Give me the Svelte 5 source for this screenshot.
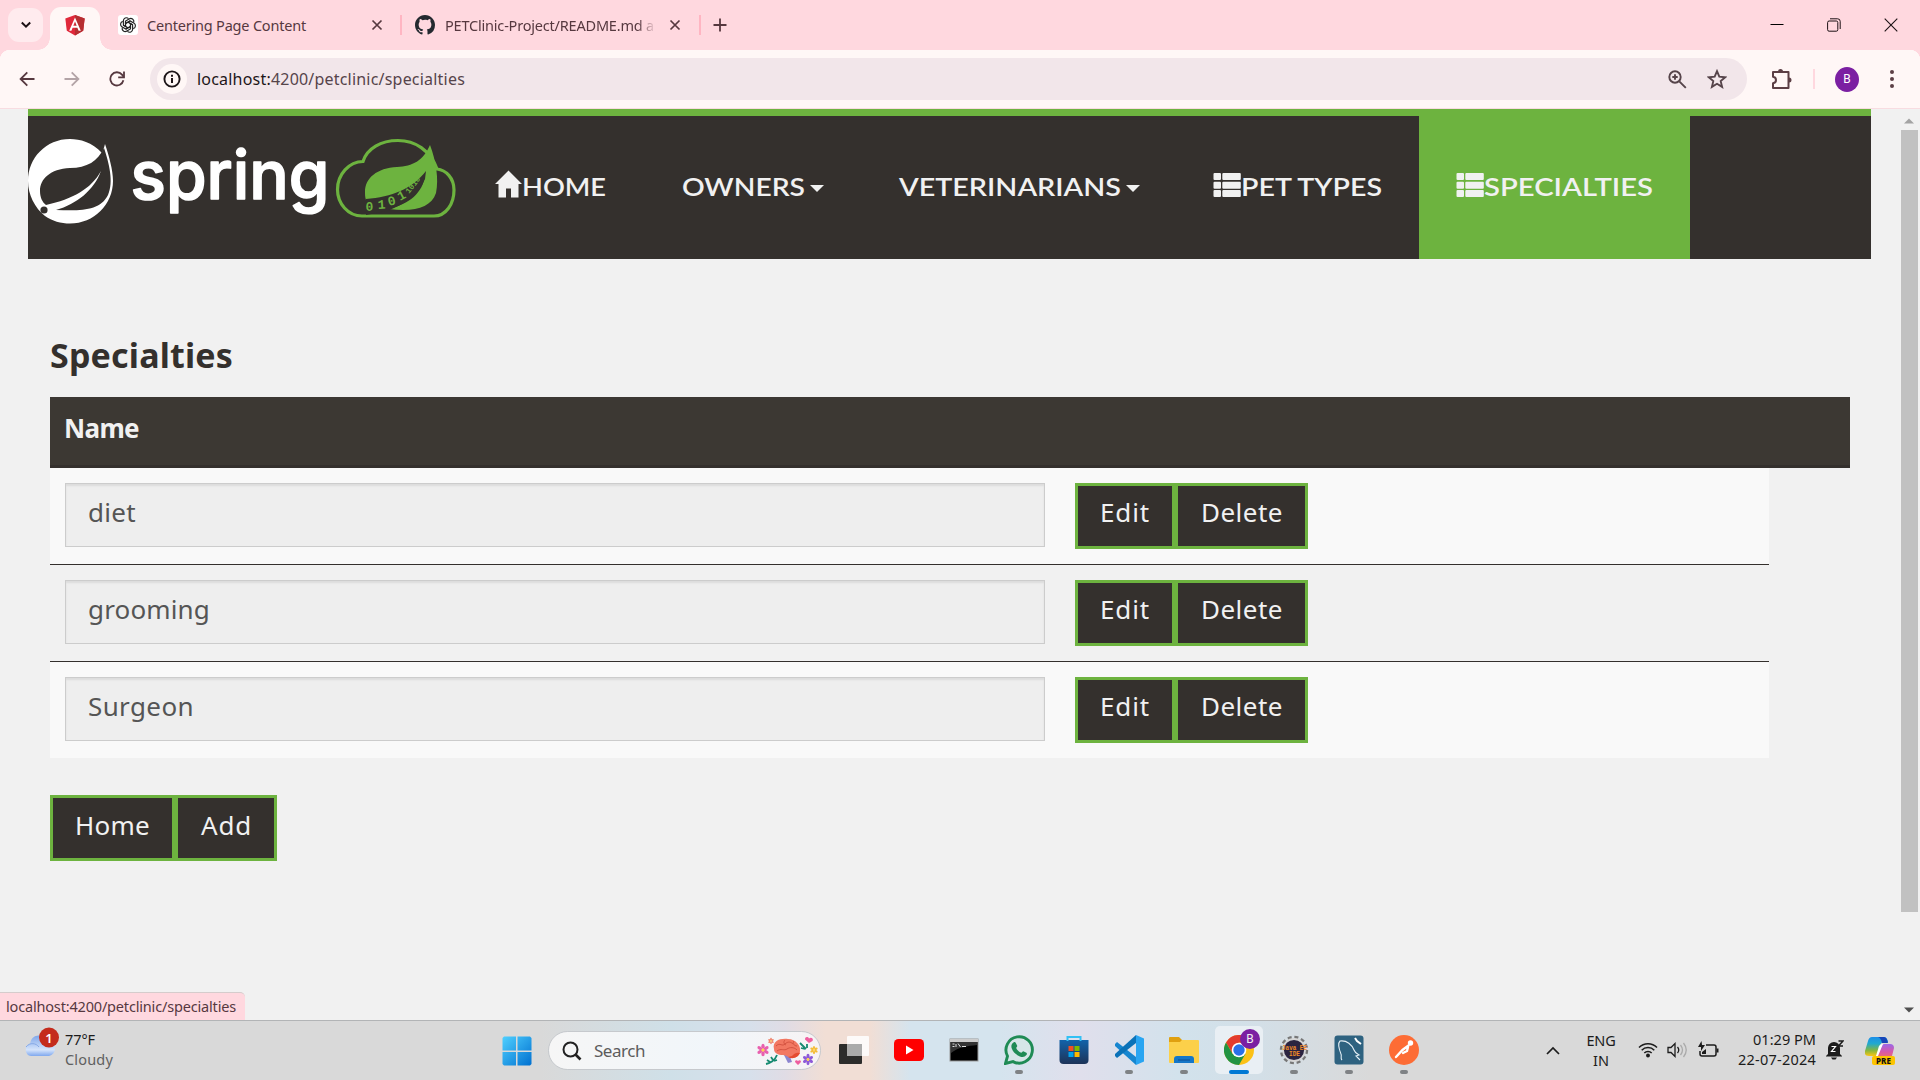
<script>
  const specialties = ['diet', 'grooming', 'Surgeon'];
  const inputWidths = { diet: 48, grooming: 122, Surgeon: 106 };

  // Tracks a label out (or in) so that it fills the given width.
  function fit(node, width) {
    const natural = node.getBoundingClientRect().width;
    node.style.letterSpacing = (width - natural) / node.textContent.length + 'px';
  }
</script>

{#snippet navText(label, width)}
  <svg class="nav-text" width={width} height="36" viewBox="0 0 {width} 36">
    <text x="0" y="27" textLength={width} lengthAdjust="spacingAndGlyphs">{label}</text>
  </svg>
{/snippet}

{#snippet listIcon()}
  <svg class="list-icon" width="28" height="24" viewBox="0 0 28 24">
    {#each [0, 8.7, 17] as y}
      <rect x="0.5" {y} width="7.5" height="7" rx="1" />
      <rect x="9.3" {y} width="18.5" height="7" rx="1" />
    {/each}
  </svg>
{/snippet}

{#snippet closeIcon()}
  <svg width="12" height="12" viewBox="0 0 12 12"><path d="M1.5 1.5l9 9M10.5 1.5l-9 9" stroke="#56383f" stroke-width="1.7" /></svg>
{/snippet}

<div class="screen">
  <header class="tabs">
    <div class="tab-search">
      <svg width="12" height="10" viewBox="0 0 12 10"><path d="M1.8 2.5l4.2 4.2 4.2-4.2" fill="none" stroke="#1d1015" stroke-width="2" /></svg>
    </div>
    <div class="active-tab">
      <svg width="20" height="21" viewBox="0 0 20 21">
        <path d="M10 0l9.7 3.4-1.5 12.4L10 20.6 1.8 15.8.3 3.4z" fill="#e0283a" />
        <path d="M10 0l9.7 3.4-1.5 12.4L10 20.6z" fill="#b52e31" />
        <path d="M10 2.5L4.2 15.7h2.2l1.2-3h4.8l1.2 3h2.2zm0 4l1.7 4.3H8.3z" fill="#fff" fill-rule="evenodd" />
      </svg>
    </div>
    <div class="tab first">
      <span class="gpt">
        <svg width="18" height="18" viewBox="0 0 18 18" fill="none" stroke="#222" stroke-width="1.15">
          {#each [0, 60, 120, 180, 240, 300] as angle}
            <path transform="rotate({angle} 9 9)" d="M6.6 10.3V5.1l3.5-2.1a3.1 3.1 0 0 1 4.7 3.3M6.6 7.4l4.6-2.6" />
          {/each}
        </svg>
      </span>
      <span class="tab-title" use:fit={159}>Centering Page Content</span>
      {@render closeIcon()}
    </div>
    <i class="tab-sep"></i>
    <div class="tab second">
      <svg width="20" height="20" viewBox="0 0 16 16"><path fill="#24292f" d="M8 0C3.58 0 0 3.58 0 8c0 3.54 2.29 6.53 5.47 7.59.4.07.55-.17.55-.38v-1.49c-2.01.37-2.53-.49-2.69-.94-.09-.23-.48-.94-.82-1.13-.28-.15-.68-.52-.01-.53.63-.01 1.08.58 1.23.82.72 1.21 1.87.87 2.33.66.07-.52.28-.87.51-1.07-1.78-.2-3.64-.89-3.64-3.95 0-.87.31-1.59.82-2.15-.08-.2-.36-1.02.08-2.12 0 0 .67-.21 2.2.82A7.4 7.4 0 0 1 8 3.86c.68 0 1.36.09 2 .27 1.53-1.04 2.2-.82 2.2-.82.44 1.1.16 1.92.08 2.12.51.56.82 1.27.82 2.15 0 3.07-1.87 3.75-3.65 3.95.29.25.54.73.54 1.48v2.2c0 .21.15.46.55.38A8.01 8.01 0 0 0 16 8c0-4.42-3.58-8-8-8z" /></svg>
      <span class="tab-title faded" use:fit={209}>PETClinic-Project/README.md a</span>
      {@render closeIcon()}
    </div>
    <i class="tab-sep"></i>
    <svg class="plus" width="14" height="14" viewBox="0 0 14 14"><path d="M7 .5v13M.5 7h13" stroke="#56383f" stroke-width="1.8" /></svg>
    <div class="window-controls">
      <svg width="14" height="14" viewBox="0 0 14 14"><path d="M.5 6.500h13" stroke="#000" /></svg>
      <svg width="14" height="14" viewBox="0 0 14 14" fill="none" stroke="#1c1114"><rect x=".6" y="3" width="10.2" height="10.2" rx="1.5" /><path d="M3 .8h7.6a2.6 2.6 0 0 1 2.6 2.6V11" /></svg>
      <svg width="14" height="14" viewBox="0 0 14 14"><path d="M.7.7l12.6 12.6M13.3.7L.7 13.3" stroke="#1c1114" stroke-width="1.1" /></svg>
    </div>
  </header>

  <div class="toolbar">
    <svg class="tool" width="16" height="16" viewBox="0 0 16 16" fill="none" stroke="#56383f" stroke-width="1.8"><path d="M15.5 8H2M8.3 1.3L1.6 8l6.7 6.7" /></svg>
    <svg class="tool" width="16" height="16" viewBox="0 0 16 16" fill="none" stroke="#b3a3a6" stroke-width="1.8"><path d="M.5 8H14M7.7 1.3L14.4 8l-6.7 6.7" /></svg>
    <svg class="tool" width="16" height="16" viewBox="0 0 16 16" fill="none" stroke="#56383f" stroke-width="1.8"><path d="M14.4 9.3A6.6 6.6 0 1 1 13 3.6l1.6 2.2" /><path d="M15 .5v5.8H9.2" /></svg>
    <div class="omnibox">
      <span class="info">
        <svg width="18" height="18" viewBox="0 0 18 18"><circle cx="9" cy="9" r="7.6" fill="none" stroke="#1d1518" stroke-width="1.9" /><path d="M9 8v5M9 4.7v2" stroke="#1d1518" stroke-width="2" /></svg>
      </span>
      <span class="url" use:fit={268}><b>localhost:</b>4200/petclinic/specialties</span>
      <svg class="zoom" width="19" height="19" viewBox="0 0 19 19" fill="none" stroke="#56444a" stroke-width="1.9"><circle cx="7" cy="7" r="5.7" /><path d="M11.3 11.3l6.5 6.5M7 4.3v5.4M4.3 7h5.4" /></svg>
      <svg width="20" height="20" viewBox="0 0 20 20" fill="none" stroke="#56444a" stroke-width="1.9"><path d="M10 2.2l2.3 5.5 5.9.5-4.5 3.9 1.4 5.8L10 14.8 4.9 17.9l1.4-5.8-4.5-3.9 5.9-.5z" /></svg>
    </div>
    <svg class="puzzle" width="22" height="22" viewBox="0 0 22 22"><path d="M2 4h15.500v16H2v-4.700c4-.6 4-6 0-6.600z" fill="none" stroke="#5c3f45" stroke-width="2" stroke-linejoin="round" /><path d="M7 3.500a2.500 2.500 0 0 1 5 0zM18 9.500a2.500 2.500 0 0 1 0 5z" fill="#5c3f45" /></svg>
    <i class="tool-sep"></i>
    <span class="avatar">B</span>
    <svg class="dots" width="4" height="18" viewBox="0 0 4 18" fill="#5c3f45"><circle cx="2" cy="2" r="2" /><circle cx="2" cy="9" r="2" /><circle cx="2" cy="16" r="2" /></svg>
  </div>

  <main class="page">
    <div class="content">
      <nav>
        <svg class="logo" width="428" height="109" viewBox="0 -23 428 109">
          <path d="M74 14C64 3 52 0 42 0 18 0 0 19 0 42c0 14 7 27 17 35 7 5 16 7.500 25 7.500 24 0 43-19 43-42.500C85 31 81 17 77 5c-1 4-2 6-3 9z" fill="#fff" />
          <path d="M76 9c-6 13-17 20-34 20C22 30 12 40 12 52c0 6 2 11 6 14C45 60 63 50 73 32c-7 19-24 33-45 39 25 1 44 1 52-15 6-13 1-32-4-47z" fill="#34302d" />
          <circle cx="16" cy="71" r="3.600" fill="#34302d" />
          <text class="brand" x="102.500" y="60" textLength="199" lengthAdjust="spacingAndGlyphs">spring</text>
          <path d="M334 77h72c12 0 20-12 20-26 0-12-8-20-17-21C402 11 387 1.500 370 1.500c-17 0-31 8-35 21-14 0-25.500 13-25.500 28 0 14 10.500 26.500 24.500 26.500z" fill="none" stroke="#6db33f" stroke-width="3.200" />
          <path d="M402 6c-7 16-17 21-33 22-20 1-32 11-32 25 0 3 0 5 1 8l4 8c25-5 45-14 55-33-2 18-16 29-36 34 25 3 42-1 47-16 3-14 0-32-6-48z" fill="#6db33f" />
          <path d="M338 60c26-2 46-10 60-28l-1 8c-7 17-22 26-38 32l-21 4z" fill="#34302d" />
          <g class="bits" fill="#6db33f"><text x="337.500" y="72">0</text><text x="350" y="70" transform="rotate(-4 350 70)">1</text><text x="361" y="67" transform="rotate(-15 361 67)">0</text><text x="372" y="62" transform="rotate(-28 372 62)">1</text><text class="tiny" x="381" y="55" transform="rotate(-52 381 55)">1010</text></g>
        </svg>
        <div class="item home">
          <svg class="home-icon" width="28" height="28" viewBox="0 0 28 28"><path d="M14.500 .5L28 14H24.500v13.500H17v-9h-5v9H4.500V14H1z" fill="#f1f1f1" /></svg>
          {@render navText('HOME', 84)}
        </div>
        <div class="item owners">{@render navText('OWNERS', 123)}<i class="caret"></i></div>
        <div class="item vets">{@render navText('VETERINARIANS', 222)}<i class="caret"></i></div>
        <div class="item types">{@render listIcon()}{@render navText('PET TYPES', 141)}</div>
        <div class="item active">{@render listIcon()}{@render navText('SPECIALTIES', 169)}</div>
      </nav>

      <section>
        <h2><span use:fit={183}>Specialties</span></h2>
        <div class="thead"><span use:fit={75}>Name</span></div>
        <div class="tbody">
          {#each specialties as name}
            <div class="row">
              <div class="field"><span use:fit={inputWidths[name]}>{name}</span></div>
              <button class="edit"><span use:fit={50}>Edit</span></button>
              <button class="delete"><span use:fit={82}>Delete</span></button>
            </div>
          {/each}
        </div>
        <div class="actions">
          <button class="home-btn"><span use:fit={75}>Home</span></button>
          <button class="add"><span use:fit={51}>Add</span></button>
        </div>
      </section>
      <div class="status"><span use:fit={230}>localhost:4200/petclinic/specialties</span></div>
    </div>
    <aside class="scrollbar">
      <svg width="10" height="6" viewBox="0 0 10 6"><path d="M0 5.500h10L5 .5z" fill="#a3a3a3" /></svg>
      <i class="thumb"></i>
      <svg class="down" width="10" height="6" viewBox="0 0 10 6"><path d="M0 .5h10L5 5.500z" fill="#505050" /></svg>
    </aside>
  </main>

  <footer>
    <div class="weather">
      <svg width="36" height="32" viewBox="0 0 36 32">
        <defs><linearGradient id="cloud" x2="0" y2="1"><stop stop-color="#7ea6ea" /><stop offset=".7" stop-color="#d5e4fb" /><stop offset="1" stop-color="#7fa8ee" /></linearGradient></defs>
        <path d="M7 30a6.500 6.500 0 0 1-1-12.500A9.500 9.500 0 0 1 24 15a7.600 7.600 0 0 1 1 15z" fill="url(#cloud)" />
        <path d="M2 21c4-5 10-4 13 0" fill="none" stroke="#86a9e6" />
        <circle cx="25" cy="11.500" r="10" fill="#c42b1c" />
        <text x="25" y="16.500" text-anchor="middle" class="badge-num">1</text>
      </svg>
      <div class="weather-text"><span use:fit={30}>77°F</span><span class="muted" use:fit={48}>Cloudy</span></div>
    </div>

    <div class="apps">
      <svg class="start" width="30" height="30" viewBox="0 0 30 30">
        <defs><linearGradient id="win" x2="1" y2="1"><stop stop-color="#4fd0ff" /><stop offset="1" stop-color="#0070d0" /></linearGradient></defs>
        <path d="M2 .5h12v14H.5V2zM15.500.5H28L29.500 2v12.500h-14zM.5 16h13.500v13.500H2L.5 28zM15.500 16h14v12L28 29.500H15.500z" fill="url(#win)" />
      </svg>
      <div class="search">
        <svg width="20" height="20" viewBox="0 0 20 20" fill="none" stroke="#222" stroke-width="2"><circle cx="8.500" cy="8.500" r="7" /><path d="M13.500 13.500l5 5" stroke-width="2.600" /></svg>
        <span use:fit={51}>Search</span>
        <svg class="brain" width="60" height="28" viewBox="0 0 60 28">
          <path d="M31 17l3 8-4 1-4-8z" fill="#8c85cf" />
          <path d="M16 12C14 4 22 1 30 2c8 0 13 7 12 12 0 4-3 7-8 7-4 0-5-3-9-3-5 0-9-2-9-6z" fill="#f27862" />
          <path d="M30 20c5 3 10 0 12-4-4-1-6 1-8 3z" fill="#e54c31" />
          <path d="M18 9c4-4 6 1 9-2s6-2 8 0M19 14c4-3 7 0 10-2s7-2 10 1M27 3c-2 2-1 4 1 5M36 4c-2 2 0 5 3 5" fill="none" stroke="#cf4e3c" stroke-width=".9" />
          {#each [[5, 13, 1, '#e85fae'], [50, 22.5, 0.9, '#8d5ad8'], [13, 4, 0.5, '#f08068'], [56, 13, 0.65, '#f4bd38']] as [cx, cy, size, color]}
            <g transform="translate({cx} {cy}) scale({size})" fill={color}>
              {#each [0, 60, 120, 180, 240, 300] as angle}<ellipse cx="0" cy="-3.700" rx="1.700" ry="2.600" transform="rotate({angle})" />{/each}
              <circle r="1.600" fill="#ffd34e" />
            </g>
          {/each}
          <path d="M51 6l-4-3.500c0-3 3-3 4-1 2-2 5 0 3.500 2.500zM40 28l-3-3c0-2 2-2 3-1 1-1 3-1 3 1z" fill="#ee5f9f" />
          <path d="M8 27c5-1 9-4 11-9M9 23l3 2M13 20l2 3M16 24l3-1M42 6l6 6M43 11l4 1M49 7v4" stroke="#168a70" stroke-width="1.800" fill="none" />
        </svg>
      </div>
      <div class="app"><svg width="32" height="30" viewBox="0 0 32 30"><rect x="1" y="9" width="23" height="20" rx="1" fill="#2c2c2b" /><rect x="9" y="1" width="22" height="20" rx="1" fill="#fff" opacity=".85" /><rect x="9" y="9" width="15" height="12" fill="#aaa" /></svg></div>
      <div class="app"><svg width="30" height="22" viewBox="0 0 30 22"><rect width="30" height="22" rx="4.500" fill="#f00" /><path d="M12 6.500v9l7.500-4.500z" fill="#fff" /></svg></div>
      <div class="app"><svg width="30" height="24" viewBox="0 0 30 24"><rect x="1" y="1" width="28" height="22" fill="#000" stroke="#9a9a9a" /><rect x="1" y="1" width="28" height="3" fill="#ccc" /><path d="M2 4h26v3C18 8 10 9 2 15z" fill="#333" /><path d="M3.500 6h2M3.500 8.500h2M7 6v3M9 5.500l2.500 3.500M13 8.500h4" stroke="#ddd" /></svg></div>
      <div class="app running"><svg width="30" height="30" viewBox="0 0 30 30"><path d="M1.500 28.500l2-7.400A13.200 13.200 0 1 1 9 26.600z" fill="#d6e6e8" stroke="#1f8b55" stroke-width="2.900" /><path d="M9.500 7.500c.8-.6 1.700-.5 2.200.3l1.500 3c.3.700-.9 1.700-1 2.200.8 2.100 2.700 3.800 5 4.700.6-.1 1.400-1.500 2.100-1.500l3.100 1.500c.8.500.6 1.500 0 2.400-1.700 2.200-4.100 2.200-6.500 1.300-3.800-1.400-7-4.500-8.200-8.100-.7-2.200-.3-4.400 1.800-5.800z" fill="#1f8b55" /></svg></div>
      <div class="app"><svg width="30" height="30" viewBox="0 0 30 30"><defs><linearGradient id="store" x2="0" y2="1"><stop stop-color="#1263aa" /><stop offset="1" stop-color="#1d3358" /></linearGradient></defs><path d="M.5 5h29v20q0 4-4 4h-21q-4 0-4-4z" fill="url(#store)" /><path d="M8.500 6V2h13v4" fill="none" stroke="#32c0f4" stroke-width="2" /><path d="M9.500 11h5v5h-5z" fill="#f25022" /><path d="M15.500 11h5v5h-5z" fill="#7fba00" /><path d="M9.500 17h5v5h-5z" fill="#00a4ef" /><path d="M15.500 17h5v5h-5z" fill="#ffb900" /></svg></div>
      <div class="app running"><svg width="30" height="30" viewBox="0 0 30 30"><path d="M1 9l2-2 19 15v8L1 11z" fill="#1686d0" /><path d="M1 21l2 2L22 8V0L1 19z" fill="#0a72b8" /><path d="M22 0l8 3.500v23L22 30z" fill="#29a5f2" /></svg></div>
      <div class="app running"><svg width="30" height="28" viewBox="0 0 30 28"><path d="M0 2q0-1 1-1h9l3 3v6H0z" fill="#e0a010" /><path d="M0 6h11l2-2h16q1 0 1 1v21q0 1-1 1H1q-1 0-1-1z" fill="#fcd04a" /><path d="M5 27v-4q0-3 3-3h14q3 0 3 3v4z" fill="#1477c8" /><path d="M9 24h12" stroke="#0c4f91" /></svg></div>
      <div class="app running chrome">
        <svg width="30" height="30" viewBox="0 0 30 30"><circle cx="15" cy="15" r="15" fill="#fbc116" /><path d="M2 7.500A15 15 0 0 1 28 7.500H15l-6.500 11z" fill="#e33b2e" /><path d="M2 7.500A15 15 0 0 0 15 30l6.500-11.200H8.500z" fill="#229342" /><circle cx="15" cy="15" r="7.300" fill="#fff" /><circle cx="15" cy="15" r="5.700" fill="#2a70e8" /></svg>
        <span class="chrome-badge">B</span>
      </div>
      <div class="app running"><svg class="eclipse" width="30" height="30" viewBox="0 0 30 30"><circle cx="15" cy="15" r="12.700" fill="none" stroke="#777" stroke-width="3" stroke-dasharray="3.900 2.750" /><circle cx="15" cy="15" r="11" fill="#2b2440" stroke="#d5d5d5" stroke-width="1.800" /><text x="3" y="14.500" textLength="25" lengthAdjust="spacingAndGlyphs" class="ide">Java EE</text><text x="10" y="21" textLength="11" lengthAdjust="spacingAndGlyphs" class="ide">IDE</text></svg></div>
      <div class="app running"><svg width="30" height="30" viewBox="0 0 30 30"><rect x=".5" y=".5" width="29" height="29" rx="3" fill="#2e6280" /><path d="M8 25c-2-2 0-4-1-6-2-5-3-11-1-13 7-1 12 4 14 9 1 3 3 4 5 5l-3 1 4 4" fill="none" stroke="#e6f0f6" stroke-width="1.100" /><path d="M21 3l2 3 4 3" fill="none" stroke="#fff" stroke-width="2" /></svg></div>
      <div class="app running"><svg width="30" height="30" viewBox="0 0 30 30"><circle cx="15" cy="15" r="15" fill="#fd6c35" /><circle cx="21.500" cy="8" r="2.700" fill="#fff" /><path d="M19.500 10.500l-6 4.500L7 22M19 12l-1 4-4 2" fill="none" stroke="#fff" stroke-width="2.400" stroke-linecap="round" /></svg></div>
    </div>

    <div class="tray">
      <svg class="chev" width="14" height="9" viewBox="0 0 14 9"><path d="M1 8l6-6 6 6" fill="none" stroke="#1c1c1c" stroke-width="1.700" /></svg>
      <div class="lang"><span use:fit={29}>ENG</span><span use:fit={16}>IN</span></div>
      <svg class="wifi" width="20" height="17" viewBox="0 0 20 17" fill="none" stroke="#1c1c1c" stroke-width="1.500"><path d="M1 6.500a12.500 12.500 0 0 1 18 0M3.700 9.300a8.700 8.700 0 0 1 12.600 0M6.300 12a5.100 5.100 0 0 1 7.400 0" /><circle cx="10" cy="14.500" r="1.200" fill="#1c1c1c" /></svg>
      <svg class="volume" width="21" height="18" viewBox="0 0 21 18" fill="none" stroke="#1c1c1c" stroke-width="1.300"><path d="M1 6.500h3l4-4v13l-4-4H1z" /><path d="M10.500 6q2.500 3 0 6" /><path d="M13.500 4q4 5 0 10M16.500 2q5.500 7 0 14" stroke="#aaa" /></svg>
      <svg class="battery" width="21" height="18" viewBox="0 0 21 18" fill="none" stroke="#1c1c1c" stroke-width="1.500"><path d="M8 4h8q2 0 2 2v7q0 2-2 2H4q-2 0-2-2v-3" /><path d="M19.500 7.500v4" stroke-width="2" /><path d="M3.500 0L0 6h3v4l4-6H4z M4 13V11l4-3v5z" fill="#1c1c1c" stroke="none" /></svg>
      <div class="clock"><span use:fit={63}>01:29 PM</span><span use:fit={78}>22-07-2024</span></div>
      <svg class="bell" width="18" height="20" viewBox="0 0 18 20"><path d="M2 14V8a6 6 0 0 1 12 0v6l2 2v.5H0V16z" fill="#1c1c1c" /><path d="M5 17.500h6l-1.500 2h-3z" fill="#1c1c1c" /><path d="M5.500 6.500h4l-4 5h4" stroke="#fff" stroke-width="1.200" fill="none" /><path d="M12.500 1H17l-4.500 5H17" stroke="#1c1c1c" stroke-width="1.500" fill="none" /></svg>
      <svg class="copilot" width="30" height="30" viewBox="0 0 30 30">
        <defs>
          <linearGradient id="cp1" x2="0" y2="1"><stop stop-color="#1d8fe8" /><stop offset=".35" stop-color="#20a9cf" /><stop offset=".7" stop-color="#83b640" /><stop offset="1" stop-color="#fac514" /></linearGradient>
          <linearGradient id="cp2" x2="0" y2="1"><stop stop-color="#9a68e8" /><stop offset=".5" stop-color="#d858a7" /><stop offset="1" stop-color="#f17852" /></linearGradient>
        </defs>
        <path d="M7 1h12q3 0 4 5h-4q-3 0-4 4l-3 10H4q-5 0-4-5L3 5q1-4 4-4z" fill="url(#cp1)" />
        <path d="M15 1h4q3 0 4 6h-6q-1-5-4-6z" fill="#1746b8" />
        <path d="M19 8h6q4 0 4 4l-3 12H10l3-5 3-8q1-3 3-3z" fill="url(#cp2)" />
        <path d="M18 8l-5 12h-2l3-10q1-2 4-2z" fill="#fff" />
        <rect x="7" y="20" width="23" height="9" rx="2" fill="#fcc400" />
        <text x="18.500" y="27.500" text-anchor="middle" class="pre">PRE</text>
      </svg>
    </div>
  </footer>
</div>

<style>
  :global(body) { margin: 0; overflow: hidden; }
  .screen { width: 1920px; height: 1080px; display: flex; flex-direction: column; background: #f1f1f1; font-family: 'Noto Sans', sans-serif; overflow: hidden; }
  .screen * { box-sizing: border-box; }
  svg { display: block; flex: none; }
  span { white-space: nowrap; }

  .tabs { height: 50px; flex: none; background: #ffd8df; display: flex; align-items: center; }
  .tab-search { width: 35px; height: 34px; margin-left: 8px; border-radius: 11px; background: #ffebee; display: grid; place-items: center; }
  .active-tab { position: relative; width: 50px; height: 43px; margin: 7px 0 0 7px; padding-top: 8px; border-radius: 11px 11px 0 0; background: #fff7f6; display: flex; justify-content: center; align-items: flex-start; }
  .active-tab::before, .active-tab::after { content: ''; position: absolute; bottom: 0; width: 12px; height: 12px; }
  .active-tab::before { left: -12px; background: radial-gradient(circle at 0 0, transparent 11.5px, #fff7f6 12px); }
  .active-tab::after { right: -12px; background: radial-gradient(circle at 100% 0, transparent 11.5px, #fff7f6 12px); }
  .tab { display: flex; align-items: center; }
  .first { margin-left: 18px; width: 282px; }
  .gpt { width: 20px; height: 20px; margin-right: 9px; border-radius: 3px; background: #fff; display: grid; place-items: center; }
  .tab-title { font-size: 14.500px; line-height: 20px; color: #56383f; }
  .first > svg { margin-left: auto; margin-right: 17px; }
  .tab-sep { width: 2px; height: 20px; background: #ffb5c2; }
  .second { margin-left: 13px; width: 284px; }
  .second .tab-title { margin-left: 10px; }
  .second > svg:last-child { margin-left: auto; margin-right: 18px; }
  .faded { mask-image: linear-gradient(90deg, #000 92%, transparent 101%); }
  .plus { margin-left: 12px; }
  .window-controls { margin: 0 22px 0 auto; display: flex; gap: 43px; }

  .toolbar { height: 59px; flex: none; padding: 0 26px 0 19px; background: radial-gradient(circle at 10px 10px, #fff7f6 10px, #ffd8df 10.5px) 0 0 / 10px 10px no-repeat, radial-gradient(circle at 0 10px, #fff7f6 10px, #ffd8df 10.5px) 100% 0 / 10px 10px no-repeat, #fff7f6; border-bottom: 1px solid #f8dce1; display: flex; align-items: center; }
  .tool { margin-right: 29px; }
  .omnibox { width: 1597px; height: 42px; margin-left: -4px; padding: 0 20px 0 7px; border-radius: 21px; background: #f2e6ea; display: flex; align-items: center; flex: none; }
  .info { width: 30px; height: 30px; margin-right: 10px; border-radius: 50%; background: #fff7f6; display: grid; place-items: center; }
  .url { font-size: 16px; line-height: 24px; color: #56444a; }
  .url b { font-weight: 400; color: #1d1518; }
  .zoom { margin: 0 20px 0 auto; }
  .puzzle { margin-left: 24px; }
  .tool-sep { width: 2px; height: 20px; margin-left: 20px; background: #ffd8df; }
  .avatar { width: 25px; height: 25px; margin-left: 20px; border-radius: 50%; background: #7b1fa2; color: #fff; font: 12px/25px Roboto, sans-serif; text-align: center; }
  .dots { margin-left: 31px; }

  .page { height: 911px; flex: none; display: flex; background: #f1f1f1; }
  .content { width: 1900px; display: flex; flex-direction: column; }
  nav { width: 1843px; height: 150px; margin-left: 28px; border-top: 7px solid #6db33f; background: #34302d; display: flex; }
  .brand { font: 500 67px Inter, sans-serif; fill: #fff; stroke: #fff; stroke-width: 1.600px; stroke-linejoin: round; }
  .logo { overflow: visible; }
  .bits { font: bold 13px 'Liberation Mono', monospace; }
  .tiny { font-size: 8px; }
  .item { height: 143px; padding-bottom: 2px; display: flex; align-items: center; }
  .nav-text text { font: 600 25.500px Lato, sans-serif; fill: #f1f1f1; }
  .nav-text { overflow: visible; }
  .home { margin-left: 38px; }
  .home-icon { margin-top: -6px; }
  .owners { margin-left: 76px; }
  .vets { margin-left: 74px; }
  .types { margin-left: 72px; }
  .active { width: 271px; margin-left: 37px; padding-left: 37px; background: #6db33f; }
  .list-icon { margin-top: -3px; fill: #f1f1f1; }
  .caret { margin: 3px 0 0 5px; border: 7px solid transparent; border-top-color: #f1f1f1; border-bottom: 0; margin-right: 1px; }

  section { padding: 73px 0 0 50px; color: #34302d; }
  h2 { margin: 0; height: 46px; font: 700 34px/46px 'Noto Sans', sans-serif; }
  .thead { width: 1800px; height: 71px; margin-top: 19px; padding: 10px 14px 0; background: #3c3833; border-bottom: 3px solid #34302d; color: #f1f1f1; font: 700 26px/42px 'Noto Sans', sans-serif; }
  .tbody { width: 1719px; }
  .row { height: 97px; padding: 15px 15px 0; border-bottom: 1px solid #34302d; display: flex; align-items: flex-start; }
  .row:nth-child(odd) { background: #f9f9f9; }
  .row:last-child { height: 96px; border: 0; }
  .field { width: 980px; height: 64px; margin-right: 30px; padding: 0 22px; border: 1px solid #ccc; background: #eee; box-shadow: inset 0 2px 2px rgba(0, 0, 0, .075); color: #555; font-size: 26px; line-height: 56px; }
  button { height: 66px; margin: 0; padding: 0 0 8px 22px; border: 3px solid #6db33f; background: #34302d; color: #f1f1f1; font: 400 26px/52px 'Noto Sans', sans-serif; display: flex; justify-content: flex-start; align-items: center; }
  .edit { width: 100px; }
  .delete { width: 133px; padding-left: 23px; }
  .actions { display: flex; margin-top: 37px; }
  .actions button { padding-bottom: 6px; }
  .home-btn { width: 125px; }
  .add { width: 102px; padding-left: 23px; }
  .status { width: 245px; height: 28px; margin-top: auto; padding-left: 6px; background: #ffd8df; border-top: 1px solid #d5cccc; border-radius: 0 5px 0 0; color: #56383f; font-size: 14.500px; line-height: 26px; }
  .scrollbar { width: 18px; margin-left: auto; margin-right: 2px; display: flex; flex-direction: column; align-items: center; padding: 9px 0 7px; }
  .thumb { width: 17px; height: 782px; margin-top: 6px; background: #c1c1c1; }
  .down { margin-top: auto; }

  footer { height: 60px; flex: none; border-top: 1px solid #b2b4b6; background: linear-gradient(90deg, #d9d9d9 0 540px, #cfe0e8 670px, #d7e0eb 750px, #e0dce5 785px, #f1ded5 825px 870px, #d5e4ee 910px 1000px, #e0dfec 1080px, #d2e2ec 1180px, #d3dfe7 1260px, #d9d9d9 1370px); display: flex; }
  .weather { width: 502px; padding: 5px 0 0 24px; display: flex; }
  .weather-text { margin: 3px 0 0 5px; display: flex; flex-direction: column; align-items: flex-start; font-size: 14.500px; line-height: 20px; color: #1c1c1c; }
  .muted { color: #606060; }
  .badge-num { font: 600 13px 'Noto Sans', sans-serif; fill: #fff; }
  .apps { display: flex; }
  .start { margin-top: 15px; }
  .search { width: 273px; height: 39px; margin: 10px 5px 0 16px; padding: 0 2px 0 13px; border: 1px solid #c6c9cd; border-radius: 20px; background: linear-gradient(90deg, #f6f6f6, #f1f6fa 60%, #f7f3f4); display: flex; align-items: center; font-size: 17px; color: #5c5c5c; }
  .search span { margin-left: 12px; }
  .brain { margin-left: auto; overflow: visible; }
  .app { position: relative; width: 55px; height: 59px; padding-bottom: 1px; display: grid; place-items: center; }
  .running::after { content: ''; position: absolute; left: 24px; bottom: 6px; width: 8px; height: 4px; border-radius: 2px; background: #7f8285; }
  .chrome::before { content: ''; position: absolute; left: 4px; top: 5px; width: 48px; height: 48px; border-radius: 5px; background: #e9eff4; }
  .chrome svg { position: relative; }
  .chrome.running::after { left: 18px; width: 20px; background: #0078d4; }
  .chrome-badge { position: absolute; left: 29px; top: 8px; width: 20px; height: 20px; border-radius: 50%; background: #7b1fa2; color: #eee; font: 12px/20px Roboto, sans-serif; text-align: center; }
  .eclipse { overflow: visible; }
  .ide { font: bold 7.500px 'Liberation Mono', monospace; fill: #f08a28; }
  .tray { margin-left: auto; margin-right: 25px; display: flex; align-items: flex-start; font-size: 14.500px; line-height: 20px; color: #1c1c1c; }
  .chev { margin: 25px 26px 0 0; }
  .lang { width: 30px; margin-top: 9px; display: flex; flex-direction: column; align-items: center; }
  .wifi { margin: 20px 0 0 22px; }
  .volume { margin: 20px 0 0 9px; }
  .battery { margin: 20px 0 0 10px; }
  .clock { width: 97px; margin-top: 8px; display: flex; flex-direction: column; align-items: flex-end; }
  .bell { margin: 19px 0 0 10px; }
  .copilot { margin: 15px 0 0 21px; }
  .pre { font: 800 8px 'Noto Sans', sans-serif; fill: #111; }
</style>
